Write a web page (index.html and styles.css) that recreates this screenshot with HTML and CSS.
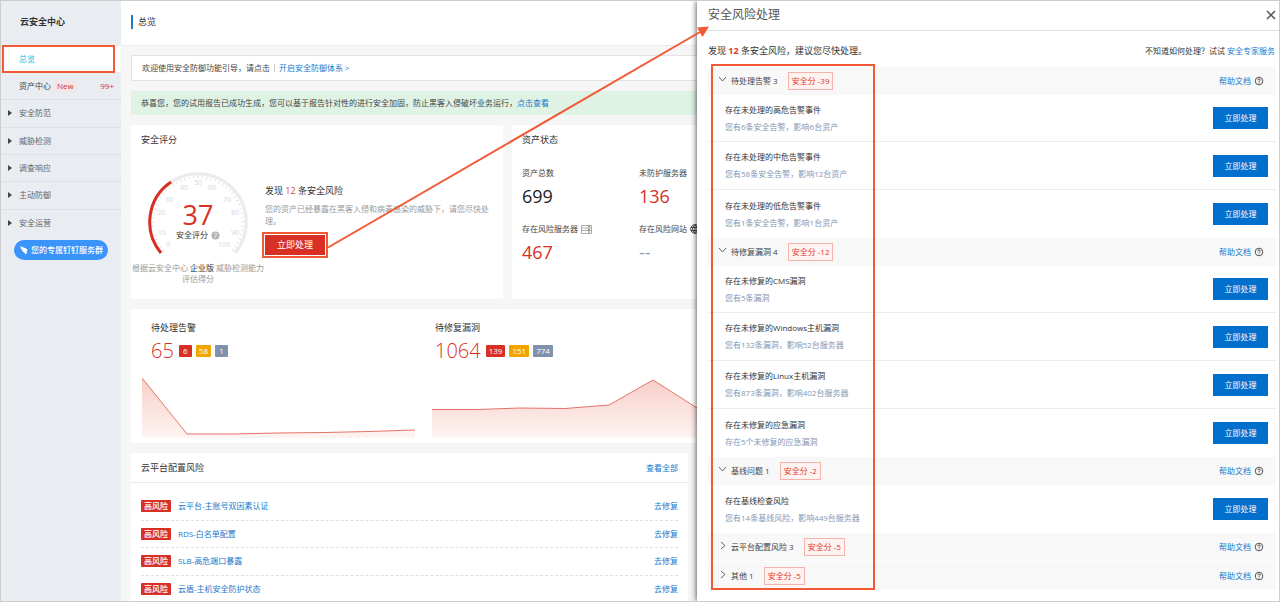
FILE: index.html
```html
<!DOCTYPE html>
<html lang="zh-CN">
<head>
<meta charset="utf-8">
<title>云安全中心</title>
<link rel="stylesheet" href="styles.css">
</head>
<body>
<div class="app">
  <aside class="sidebar">
    <h1 class="brand">云安全中心</h1>
    <a class="nav-active" href="#">总览</a>
    <ul class="nav">
      <li><a href="#"><span class="nav-dark">资产中心</span><span class="tag-new">New</span><span class="nav-count">99+</span></a></li>
      <li><a href="#"><i class="caret"></i>安全防范</a></li>
      <li><a href="#"><i class="caret"></i>威胁检测</a></li>
      <li><a href="#"><i class="caret"></i>调查响应</a></li>
      <li><a href="#"><i class="caret"></i>主动防御</a></li>
      <li><a href="#"><i class="caret"></i>安全运营</a></li>
    </ul>
    <button class="ding" type="button">
      <svg width="10" height="10" viewBox="0 0 10 10"><path d="M1 1 L8 4 Q9 5 8 6 L7.500 7 L8.500 7 L6 10 L6 8 L4.500 7.500 L5 7 Q3 6.500 2.500 5.200 L4 5.300 Q1.500 4 1.300 2.800 L3 3.200 Q1 2.300 1 1Z" fill="#fff"/></svg>
      您的专属钉钉服务群
    </button>
  </aside>

  <main class="main">
    <header class="page-head"><h2>总览</h2></header>
    <div class="content">
      <div class="welcome">欢迎使用安全防御功能引导，请点击<span class="sep"></span><a href="#">开启安全防御体系 &gt;</a></div>
      <div class="notice">恭喜您，您的试用报告已成功生成，您可以基于报告针对性的进行安全加固，防止黑客入侵破坏业务运行，<a href="#">点击查看</a></div>

      <div class="row">
        <section class="card score">
          <h3>安全评分</h3>
          <div class="score-body">
            <div class="gauge">
              <svg width="104" height="90" viewBox="146 170 104 90">
                <path d="M161 253 A48.300 48.300 0 1 1 235 253" fill="none" stroke="#ebebeb" stroke-width="3"/>
                <path d="M163.500 251 A45 45 0 1 1 232.500 251" fill="none" stroke="#e4e4e4" stroke-width="3" stroke-dasharray="1 3.400"/>
                <path d="M161 253 A48.300 48.300 0 0 1 171 182" fill="none" stroke="#d93026" stroke-width="3"/>
                <g class="dial">
                  <text x="168" y="247">0</text><text x="162" y="235">10</text><text x="161" y="215">20</text>
                  <text x="169" y="202">30</text><text x="184" y="190">40</text><text x="198" y="185">50</text>
                  <text x="212" y="190">60</text><text x="227" y="202">70</text><text x="235" y="215">80</text>
                  <text x="235" y="235">90</text><text x="224" y="247">100</text>
                </g>
                <text class="dial-value" x="198" y="225">37</text>
                <text class="dial-name" x="192" y="238">安全评分</text>
                <circle cx="215.500" cy="235.500" r="4" fill="#b5b5b5"/>
                <text class="dial-q" x="215.500" y="238">?</text>
              </svg>
              <p>根据云安全中心 <b>企业版</b> 威胁检测能力评估得分</p>
            </div>
            <div class="risk">
              <h4>发现 <em>12</em> 条安全风险</h4>
              <p>您的资产已经暴露在黑客入侵和病毒感染的威胁下，请您尽快处理。</p>
              <button class="btn-red" type="button">立即处理</button>
            </div>
          </div>
        </section>
        <section class="card assets">
          <h3>资产状态</h3>
          <dl>
            <div><dt>资产总数</dt><dd class="black">699</dd></div>
            <div><dt>未防护服务器</dt><dd>136</dd></div>
            <div><dt>存在风险服务器
              <svg width="11" height="9" viewBox="0 0 11 9"><path d="M.5.5h10v8H.5zM.5 3h10M.5 5.500h10" fill="none" stroke="#aaa"/><path d="M7 1.700h2M7 4.300h2M7 7h2" stroke="#777"/></svg></dt><dd>467</dd></div>
            <div><dt>存在风险网站
              <svg width="10" height="10" viewBox="0 0 10 10"><path d="M5 .7a4.300 4.300 0 1 1 0 8.600a4.300 4.300 0 1 1 0-8.600zM5 .7c-3 2.500-3 6 0 8.600c3-2.500 3-6 0-8.600zM1 3.500h8M1 6.500h8M5 .7v8.600" fill="none" stroke="#444"/></svg></dt><dd class="none">--</dd></div>
          </dl>
        </section>
      </div>

      <section class="card charts">
        <svg width="0" height="0" class="defs"><defs><linearGradient id="fade" x1="0" y1="0" x2="0" y2="1"><stop offset="0" stop-color="#f8cfc9"/><stop offset="1" stop-color="#fef4f2"/></linearGradient></defs></svg>
        <div class="chart">
          <h3>待处理告警</h3>
          <div class="figures"><strong>65</strong><span class="lv high">6</span><span class="lv mid">58</span><span class="lv low">1</span></div>
          <svg width="273" height="62" viewBox="0 0 273 62">
            <path d="M0 1L45 57L90 57L136 56L182 55.500L227 54.500L273 53V61H0Z" fill="url(#fade)"/>
            <path d="M0 1L45 57L90 57L136 56L182 55.500L227 54.500L273 53" fill="none" stroke="#e57368"/>
          </svg>
        </div>
        <div class="chart second">
          <h3>待修复漏洞</h3>
          <div class="figures"><strong>1064</strong><span class="lv high">139</span><span class="lv mid">151</span><span class="lv low">774</span></div>
          <svg width="273" height="62" viewBox="0 0 273 62">
            <path d="M0 32.500L45 32.500L88 31L133 31.500L177 28L221 3L265 31L273 36V61H0Z" fill="url(#fade)"/>
            <path d="M0 32.500L45 32.500L88 31L133 31.500L177 28L221 3L265 31L273 36" fill="none" stroke="#e57368"/>
          </svg>
        </div>
      </section>

      <section class="card config">
        <header><h3>云平台配置风险</h3><a href="#">查看全部</a></header>
        <ul>
          <li><span class="badge">高风险</span><a href="#">云平台-主账号双因素认证</a><a class="fix" href="#">去修复</a></li>
          <li><span class="badge">高风险</span><a href="#">RDS-白名单配置</a><a class="fix" href="#">去修复</a></li>
          <li><span class="badge">高风险</span><a href="#">SLB-高危端口暴露</a><a class="fix" href="#">去修复</a></li>
          <li><span class="badge">高风险</span><a href="#">云盾-主机安全防护状态</a><a class="fix" href="#">去修复</a></li>
        </ul>
      </section>
    </div>
  </main>

  <section class="drawer">
    <header class="drawer-head"><h2>安全风险处理</h2>
      <button class="close" type="button" aria-label="关闭"><svg width="10" height="10" viewBox="0 0 10 10"><path d="M1 1L9 9M9 1L1 9" stroke="#555" stroke-width="1.500"/></svg></button></header>
    <div class="drawer-sub"><p class="found">发现 <b>12</b> 条安全风险，建议您尽快处理。</p><p>不知道如何处理？试试 <a href="#">安全专家服务</a></p></div>
    <div class="groups">
      <section>
        <div class="group-head"><svg class="chev" width="9" height="9" viewBox="0 0 9 9"><path d="M1 2L4.500 6L8 2"/></svg><span>待处理告警 3</span><span class="minus">安全分 -39</span><a href="#">帮助文档</a><svg class="help" width="10" height="10" viewBox="0 0 10 10"><circle cx="5" cy="5" r="3.800"/><path d="M3.700 4.200Q3.800 2.900 5 2.900Q6.300 2.900 6.300 4Q6.300 4.600 5.500 5Q5 5.300 5 6M5 6.700V7.500"/></svg></div>
        <ul>
          <li><div><h4>存在未处理的高危告警事件</h4><p>您有6条安全告警，影响6台资产</p></div><button type="button">立即处理</button></li>
          <li><div><h4>存在未处理的中危告警事件</h4><p>您有58条安全告警，影响12台资产</p></div><button type="button">立即处理</button></li>
          <li><div><h4>存在未处理的低危告警事件</h4><p>您有1条安全告警，影响1台资产</p></div><button type="button">立即处理</button></li>
        </ul>
      </section>
      <section>
        <div class="group-head"><svg class="chev" width="9" height="9" viewBox="0 0 9 9"><path d="M1 2L4.500 6L8 2"/></svg><span>待修复漏洞 4</span><span class="minus">安全分 -12</span><a href="#">帮助文档</a><svg class="help" width="10" height="10" viewBox="0 0 10 10"><circle cx="5" cy="5" r="3.800"/><path d="M3.700 4.200Q3.800 2.900 5 2.900Q6.300 2.900 6.300 4Q6.300 4.600 5.500 5Q5 5.300 5 6M5 6.700V7.500"/></svg></div>
        <ul>
          <li><div><h4>存在未修复的CMS漏洞</h4><p>您有5条漏洞</p></div><button type="button">立即处理</button></li>
          <li><div><h4>存在未修复的Windows主机漏洞</h4><p>您有132条漏洞，影响52台服务器</p></div><button type="button">立即处理</button></li>
          <li><div><h4>存在未修复的Linux主机漏洞</h4><p>您有873条漏洞，影响402台服务器</p></div><button type="button">立即处理</button></li>
          <li><div><h4>存在未修复的应急漏洞</h4><p>存在5个未修复的应急漏洞</p></div><button type="button">立即处理</button></li>
        </ul>
      </section>
      <section>
        <div class="group-head"><svg class="chev" width="9" height="9" viewBox="0 0 9 9"><path d="M1 2L4.500 6L8 2"/></svg><span>基线问题 1</span><span class="minus">安全分 -2</span><a href="#">帮助文档</a><svg class="help" width="10" height="10" viewBox="0 0 10 10"><circle cx="5" cy="5" r="3.800"/><path d="M3.700 4.200Q3.800 2.900 5 2.900Q6.300 2.900 6.300 4Q6.300 4.600 5.500 5Q5 5.300 5 6M5 6.700V7.500"/></svg></div>
        <ul>
          <li><div><h4>存在基线检查风险</h4><p>您有14条基线风险，影响449台服务器</p></div><button type="button">立即处理</button></li>
        </ul>
      </section>
      <section class="closed">
        <div class="group-head"><svg class="chev" width="9" height="9" viewBox="0 0 9 9"><path d="M3 1L7 4.500L3 8"/></svg><span>云平台配置风险 3</span><span class="minus">安全分 -5</span><a href="#">帮助文档</a><svg class="help" width="10" height="10" viewBox="0 0 10 10"><circle cx="5" cy="5" r="3.800"/><path d="M3.700 4.200Q3.800 2.900 5 2.900Q6.300 2.900 6.300 4Q6.300 4.600 5.500 5Q5 5.300 5 6M5 6.700V7.500"/></svg></div>
      </section>
      <section class="closed">
        <div class="group-head"><svg class="chev" width="9" height="9" viewBox="0 0 9 9"><path d="M3 1L7 4.500L3 8"/></svg><span>其他 1</span><span class="minus">安全分 -5</span><a href="#">帮助文档</a><svg class="help" width="10" height="10" viewBox="0 0 10 10"><circle cx="5" cy="5" r="3.800"/><path d="M3.700 4.200Q3.800 2.900 5 2.900Q6.300 2.900 6.300 4Q6.300 4.600 5.500 5Q5 5.300 5 6M5 6.700V7.500"/></svg></div>
      </section>
      <div class="mark"></div>
    </div>
  </section>

  <svg class="arrow" width="384" height="224" viewBox="327 25 384 224"><path d="M328 247.500L700 32" stroke="#f15a35" stroke-width="2"/><path d="M709 26.500L697 27.500L702.500 37Z" fill="#f15a35"/></svg>
</div>
</body>
</html>
```

FILE: styles.css
```css
* { box-sizing: border-box; margin: 0; padding: 0; }
body {
  font: 8px/12px "Open Sans", "Noto Sans CJK SC", sans-serif;
  color: #444;
}
ul { list-style: none; }
a { color: #2079cb; text-decoration: none; }
button { font: inherit; border: 0; cursor: pointer; }
h1, h2, h3, h4 { font-size: 9px; font-weight: 400; color: #333; }
svg { flex: none; }

.app {
  position: relative;
  display: flex;
  height: 100vh;
  min-height: 602px;
  border: 1px solid #ccc;
  background: #f6f6f6;
  overflow: hidden;
}

/* sidebar */
.sidebar { flex: 0 0 120px; background: #e9edf2; }
.brand { height: 45px; padding: 15px 19px; font-weight: 700; }
.nav-active {
  display: flex;
  align-items: center;
  height: 26px;
  padding-left: 16px;
  margin: 0 7px 1px 2px;
  background: #fff;
  color: #23b7dc;
  outline: 2px solid #f15a35;
  outline-offset: -1px;
  box-shadow: 7px 0 #fff;
}
.nav { display: grid; grid-auto-rows: 1fr; height: 164px; }
.nav li { border-bottom: 1px solid #dddfe3; }
.nav li:last-child { border-bottom: 0; }
.nav a { display: flex; align-items: center; height: 100%; padding: 0 7px; color: #666; }
.nav-dark { padding-left: 11px; color: #444; }
.tag-new { margin-left: 3px; padding: 0 3px; border-radius: 4px; background: #f3e6e8; color: #d93026; }
.nav-count { margin-left: auto; color: #d93026; }
.caret {
  margin-right: 7px;
  border: solid transparent;
  border-width: 3px 0 3px 4px;
  border-left-color: #444;
}
.ding {
  display: flex;
  align-items: center;
  justify-content: center;
  gap: 2px;
  width: 94px;
  height: 20px;
  margin: 3px 0 0 13px;
  border-radius: 10px;
  background: #3a94fa;
  color: #fff;
  font-weight: 500;
  white-space: nowrap;
}

/* overview */
.main { flex: 1; min-width: 0; overflow: hidden; }
.page-head { height: 45px; padding: 14px 10px; background: #fff; border-bottom: 1px solid #ececec; }
.page-head h2 { padding-left: 5px; border-left: 2px solid #2079cb; line-height: 14px; }
.content { display: flex; flex-direction: column; gap: 10px; padding: 9px 0 0 10px; white-space: nowrap; }
.welcome { display: flex; align-items: center; height: 26px; padding-left: 10px; background: #fff; border: 1px solid #e3e3e3; border-right: 0; }
.sep { width: 1px; height: 8px; margin: 0 4px; background: #ccc; }
.notice { height: 24px; padding: 6px 10px; background: #def3e4; }
.row { display: flex; gap: 9px; }
.card { background: #fff; }
.score { flex: 0 0 372px; height: 174px; padding: 9px 10px; }
.score-body { display: flex; margin-left: -10px; }
.gauge { flex: 0 0 134px; padding-top: 24px; text-align: center; color: #999; line-height: 11px; }
.gauge svg { display: block; margin: 0 auto 2px; }
.gauge p { white-space: normal; }
.gauge b { font-weight: 400; color: #333; }
.dial text { font-size: 7px; fill: #d6d6d6; text-anchor: middle; }
.dial-value { font-size: 27px; fill: #d93026; text-anchor: middle; }
.dial-name { font-size: 8px; fill: #333; text-anchor: middle; }
.dial-q { font-size: 7px; fill: #fff; text-anchor: middle; }
.risk { flex: 1; padding: 39px 2px 0 0; }
.risk em { font-style: normal; color: #e0492f; }
.risk p { margin: 6px 0 8px; color: #999; white-space: normal; }
.btn-red {
  display: block;
  width: 60px;
  height: 20px;
  background: #d93026;
  color: #fff;
  font-size: 9px;
  outline: 2px solid #f15a35;
  outline-offset: 1px;
}
.assets { flex: 1; padding: 9px 10px; overflow: hidden; }
.assets dl { display: grid; grid-template-columns: 117px 117px; row-gap: 15px; padding-top: 21px; }
.assets dt { display: flex; align-items: center; gap: 3px; height: 12px; }
.assets dd { margin-top: 5px; font-size: 18px; line-height: 24px; color: #d93026; }
.assets dd.black { color: #222; }
.assets dd.none { color: #8fa0b5; }

.charts { display: flex; height: 134px; padding: 13px 0 0 11px; gap: 17px; overflow: hidden; }
.defs { position: absolute; }
.chart { flex: 0 0 273px; }
.chart h3, .figures { padding-left: 9px; }
.second h3, .second .figures { padding-left: 3px; }
.figures { display: flex; align-items: center; gap: 4px; height: 30px; margin: 2px 0 11px; }
.figures strong { font-size: 20px; font-weight: 300; color: #d93026; line-height: 30px; margin-right: 1px; }
.lv { min-width: 13px; padding: 0 3px; border-radius: 1px; color: #fff; text-align: center; }
.high { background: #d93026; }
.mid { background: #f2a500; }
.low { background: #8091ab; }
.chart > svg { display: block; }

.config { margin-right: 9px; }
.config header { display: flex; justify-content: space-between; align-items: center; height: 30px; padding: 0 10px; border-bottom: 1px solid #e8e8e8; }
.config ul { display: grid; grid-auto-rows: 1fr; height: 110px; margin: 10px 10px 0; }
.config li { display: flex; align-items: center; gap: 7px; border-bottom: 1px dashed #e0e0e0; }
.badge { padding: 0 3px; background: #d93026; border-radius: 1px; color: #fff; font-weight: 500; }
.fix { margin-left: auto; }

/* risk drawer */
.drawer { position: relative; flex: 0 0 582px; background: #fff; box-shadow: 0 0 6px rgba(0, 0, 0, .8); }
.drawer-head { display: flex; justify-content: space-between; align-items: center; height: 30px; padding: 0 3px 2px 11px; border-bottom: 1px solid #e0e0e0; }
.drawer-head h2 { font-size: 12px; line-height: 16px; color: #555; }
.close { display: flex; background: none; }
.drawer-sub { display: flex; justify-content: space-between; align-items: center; height: 36px; padding: 4px 4px 0 11px; color: #333; }
.found { font-size: 9px; }
.found b { color: #e0392f; }
.groups { position: relative; margin: 0 3px 0 11px; }
.group-head { display: flex; align-items: center; height: 28px; padding: 0 12px 0 10px; background: #f8f8f8; }
.chev { margin: 0 4px 3px 0; fill: none; stroke: #666; }
.minus { margin-left: 10px; padding: 2px 3px; border: 1px solid #f5b3a9; background: #fff3f1; color: #e0392f; }
.group-head a { margin-left: auto; }
.help { margin-left: 3px; fill: none; stroke: #555; stroke-width: 1; }
.groups li { display: flex; align-items: center; justify-content: space-between; height: 48px; padding: 0 8px 0 17px; border-bottom: 1px solid #ececec; }
.groups li:first-child:not(:last-child) { height: 47px; }
.groups li:last-child { border-bottom: 0; }
.groups li h4 { font-size: 8px; margin-bottom: 5px; }
.groups li p { color: #8497b5; }
.groups li button { width: 55px; height: 22px; background: #0070cc; color: #fff; }
.closed + .closed { margin-top: 1px; }
.mark { position: absolute; top: -3px; bottom: 0; left: 3px; width: 164px; border: 2px solid #f15a35; }

.arrow { position: absolute; left: 326px; top: 24px; pointer-events: none; }
```
